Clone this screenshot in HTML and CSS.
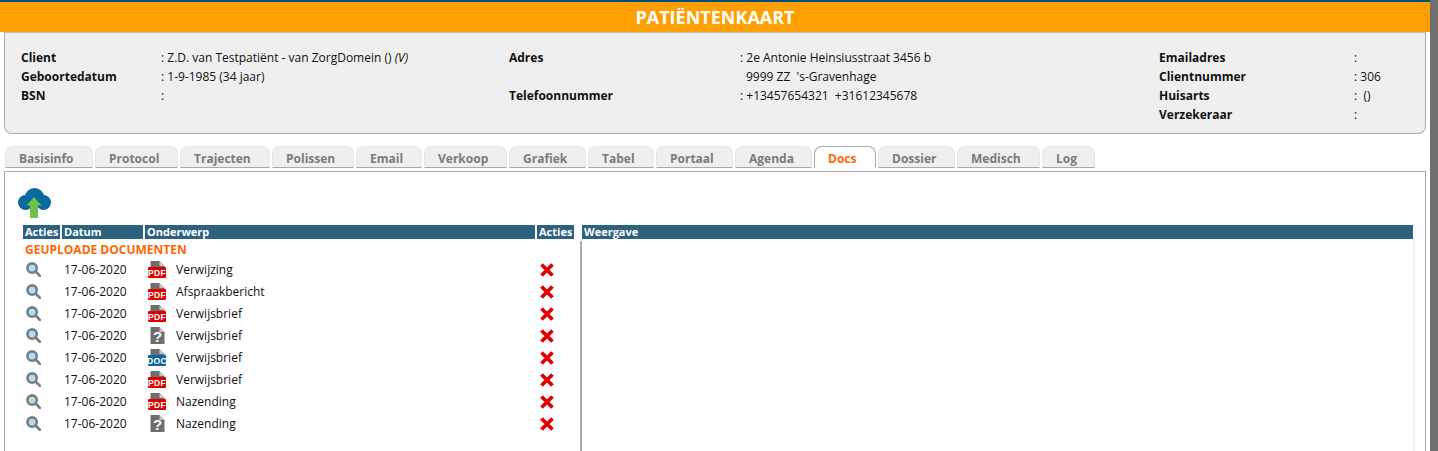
FILE: index.html
```html
<!DOCTYPE html>
<html lang="nl">
<head>
<meta charset="utf-8">
<title>Patiëntenkaart</title>
<link rel="stylesheet" href="styles.css">
</head>
<body>
<svg class="defs" width="0" height="0" aria-hidden="true">
  <symbol id="mag" viewBox="0 0 16 16">
    <circle cx="6.500" cy="6.500" r="5" fill="#b5dcf5" stroke="#7a7f83" stroke-width="2.800"/>
    <path d="M10.500 10.500 14.800 14.800" stroke="#7a7f83" stroke-width="3" stroke-linecap="round"/>
  </symbol>
  <symbol id="del" viewBox="0 0 14 14">
    <path d="M1.500 1.500 12.500 12.500M12.500 1.500 1.500 12.500" stroke="#e00000" stroke-width="3.800"/>
  </symbol>
  <symbol id="page" viewBox="0 0 18 18">
    <path d="M2.500 0H11.500L16.500 5V17H2.500Z" fill="#6e6e6e"/>
    <path d="M11.500 0 16.500 5H11.500Z" fill="#c4c4c4"/>
  </symbol>
</svg>
<div class="page">
  <main class="main">
    <h1 class="title">PATIËNTENKAART</h1>
    <section class="info">
      <span class="lbl">Client</span><span>: Z.D. van Testpatiënt - van ZorgDomein () <i>(V)</i></span>
      <span class="lbl">Adres</span><span>: 2e Antonie Heinsiusstraat 3456 b</span>
      <span class="lbl">Emailadres</span><span>:</span>

      <span class="lbl">Geboortedatum</span><span>: 1-9-1985 (34 jaar)</span>
      <span></span><span class="ind">9999 ZZ&nbsp; 's-Gravenhage</span>
      <span class="lbl">Clientnummer</span><span>: 306</span>

      <span class="lbl">BSN</span><span>:</span>
      <span class="lbl">Telefoonnummer</span><span>: +13457654321&nbsp; +31612345678</span>
      <span class="lbl">Huisarts</span><span>:&nbsp; ()</span>

      <span></span><span></span><span></span><span></span>
      <span class="lbl">Verzekeraar</span><span>:</span>
    </section>

    <nav class="tabs">
      <a class="tab w88">Basisinfo</a>
      <a class="tab w83">Protocol</a>
      <a class="tab w90">Trajecten</a>
      <a class="tab w82">Polissen</a>
      <a class="tab w66">Email</a>
      <a class="tab w83">Verkoop</a>
      <a class="tab w77">Grafiek</a>
      <a class="tab w66">Tabel</a>
      <a class="tab w77">Portaal</a>
      <a class="tab w77">Agenda</a>
      <a class="tab active w62">Docs</a>
      <a class="tab w77">Dossier</a>
      <a class="tab w83">Medisch</a>
      <a class="tab w53">Log</a>
    </nav>

    <section class="panel">
      <svg class="upload" viewBox="0 0 33 30" aria-hidden="true">
        <g fill="#0b6a9e">
          <circle cx="7.500" cy="14.500" r="7.500"/>
          <circle cx="16.500" cy="10" r="10"/>
          <circle cx="25.500" cy="14.500" r="7.500"/>
        </g>
        <path d="M16 9 23.500 17.500H20V30H12V17.500H8.500Z" fill="#6cc24a"/>
      </svg>
      <div class="split">
        <div class="list">
          <div class="cols head"><b>Acties</b><b>Datum</b><b>Onderwerp</b><b>Acties</b></div>
          <div class="group">GEUPLOADE DOCUMENTEN</div>
          <div class="cols row">
            <svg class="mag"><use href="#mag"/></svg><span class="date">17-06-2020</span>
            <span class="subj"><svg class="doc" viewBox="0 0 18 18"><use href="#page"/><rect y="6" width="18" height="11" rx="1" fill="#e00000"/><text class="tag" x="9" y="15">PDF</text></svg>Verwijzing</span>
            <svg class="del"><use href="#del"/></svg>
          </div>
          <div class="cols row">
            <svg class="mag"><use href="#mag"/></svg><span class="date">17-06-2020</span>
            <span class="subj"><svg class="doc" viewBox="0 0 18 18"><use href="#page"/><rect y="6" width="18" height="11" rx="1" fill="#e00000"/><text class="tag" x="9" y="15">PDF</text></svg>Afspraakbericht</span>
            <svg class="del"><use href="#del"/></svg>
          </div>
          <div class="cols row">
            <svg class="mag"><use href="#mag"/></svg><span class="date">17-06-2020</span>
            <span class="subj"><svg class="doc" viewBox="0 0 18 18"><use href="#page"/><rect y="6" width="18" height="11" rx="1" fill="#e00000"/><text class="tag" x="9" y="15">PDF</text></svg>Verwijsbrief</span>
            <svg class="del"><use href="#del"/></svg>
          </div>
          <div class="cols row">
            <svg class="mag"><use href="#mag"/></svg><span class="date">17-06-2020</span>
            <span class="subj"><svg class="doc" viewBox="0 0 18 18"><use href="#page"/><text class="qm" x="9.500" y="15">?</text></svg>Verwijsbrief</span>
            <svg class="del"><use href="#del"/></svg>
          </div>
          <div class="cols row">
            <svg class="mag"><use href="#mag"/></svg><span class="date">17-06-2020</span>
            <span class="subj"><svg class="doc" viewBox="0 0 18 18"><use href="#page"/><rect y="6" width="18" height="11" rx="1" fill="#0a6a9e"/><text class="tag" x="9" y="15">DOC</text></svg>Verwijsbrief</span>
            <svg class="del"><use href="#del"/></svg>
          </div>
          <div class="cols row">
            <svg class="mag"><use href="#mag"/></svg><span class="date">17-06-2020</span>
            <span class="subj"><svg class="doc" viewBox="0 0 18 18"><use href="#page"/><rect y="6" width="18" height="11" rx="1" fill="#e00000"/><text class="tag" x="9" y="15">PDF</text></svg>Verwijsbrief</span>
            <svg class="del"><use href="#del"/></svg>
          </div>
          <div class="cols row">
            <svg class="mag"><use href="#mag"/></svg><span class="date">17-06-2020</span>
            <span class="subj"><svg class="doc" viewBox="0 0 18 18"><use href="#page"/><rect y="6" width="18" height="11" rx="1" fill="#e00000"/><text class="tag" x="9" y="15">PDF</text></svg>Nazending</span>
            <svg class="del"><use href="#del"/></svg>
          </div>
          <div class="cols row">
            <svg class="mag"><use href="#mag"/></svg><span class="date">17-06-2020</span>
            <span class="subj"><svg class="doc" viewBox="0 0 18 18"><use href="#page"/><text class="qm" x="9.500" y="15">?</text></svg>Nazending</span>
            <svg class="del"><use href="#del"/></svg>
          </div>
        </div>
        <div class="view">
          <div class="view-head">Weergave</div>
          <div class="view-body"></div>
        </div>
      </div>
    </section>
  </main>
  <div class="gutter"></div>
</div>
</body>
</html>
```
FILE: styles.css
```css
* { box-sizing: border-box; }
html, body { margin: 0; height: 451px; overflow: hidden; background: #fff; }
body { font: 12px/19px "Open Sans", sans-serif; color: #111; }
.defs { position: absolute; }
.page { display: flex; height: 451px; }
.main { width: 1430px; flex: none; height: 451px; overflow: hidden; border-top: 2px solid #00507f; }
.gutter { flex: 1; background: #6f6f6f; }

.title { margin: 0; height: 30px; background: #ff9f00; color: #fff; font-size: 18px; line-height: 30px; font-weight: 700; text-align: center; }

.info { margin-left: 4px; width: 1422px; height: 102px; background: #efefef; border: 1px solid #aaa; border-top-color: #bbb; border-radius: 0 0 8px 8px; padding: 15px 0 0 16px; display: grid; grid-template-columns: 140px 348px 231px 419px 195px 70px; grid-auto-rows: 19px; }
.lbl { font-weight: 700; }
.ind { padding-left: 6px; }

.tabs { display: flex; gap: 2px; margin: 12px 0 0 5px; height: 22px; }
.tab { height: 22px; background: #efefef; border: 1px solid #e6e6e6; border-bottom: 1px solid #aaa; border-radius: 8px 8px 0 0; color: #7b7b7b; font-weight: 700; padding-left: 13px; line-height: 23px; }
.tab.active { background: #fff; color: #f60; border-color: #aaa; border-bottom: 0; }
.w88 { width: 88px; } .w83 { width: 83px; } .w90 { width: 90px; } .w82 { width: 82px; }
.w66 { width: 66px; } .w77 { width: 77px; } .w62 { width: 62px; } .w53 { width: 53px; }

.panel { margin: 3px 0 0 4px; width: 1422px; height: 290px; border: 1px solid #aaa; border-bottom: 0; padding: 16px 0 0 13px; }
.upload { display: block; width: 33px; height: 30px; }
.split { display: grid; grid-template-columns: 551px 835px; column-gap: 6px; margin: 7px 0 0 5px; }
.cols { display: grid; grid-template-columns: 37px 81px 390px 37px; column-gap: 2px; align-items: center; }
.head { height: 14px; line-height: 14px; font-size: 11px; color: #fff; }
.head b { display: block; background: #2c617f; padding-left: 2px; height: 14px; }
.group { height: 20px; padding-left: 2px; line-height: 21px; color: #f60; font-weight: 700; }
.row { height: 22px; }
.mag { width: 15px; height: 15px; margin: 0 0 2px 3px; }
.date { padding: 0 0 2px 2px; }
.subj { display: flex; align-items: center; padding: 0 0 2px 3px; gap: 10px; }
.doc { width: 18px; height: 18px; flex: none; margin-top: 2px; }
.del { width: 14px; height: 14px; margin-left: 3px; }
.tag { fill: #fff; font: 700 8.500px "Liberation Sans", sans-serif; text-anchor: middle; letter-spacing: .4px; }
.qm { fill: #fff; font: 700 15px "Liberation Sans", sans-serif; text-anchor: middle; }
.view-head { margin: 0 2px; height: 14px; line-height: 14px; font-size: 11px; font-weight: 700; color: #fff; background: #2c617f; padding-left: 2px; }
.view-body { margin-top: 2px; height: 220px; border-left: 2px solid #aaa; border-right: 2px solid #efefef; }
```
